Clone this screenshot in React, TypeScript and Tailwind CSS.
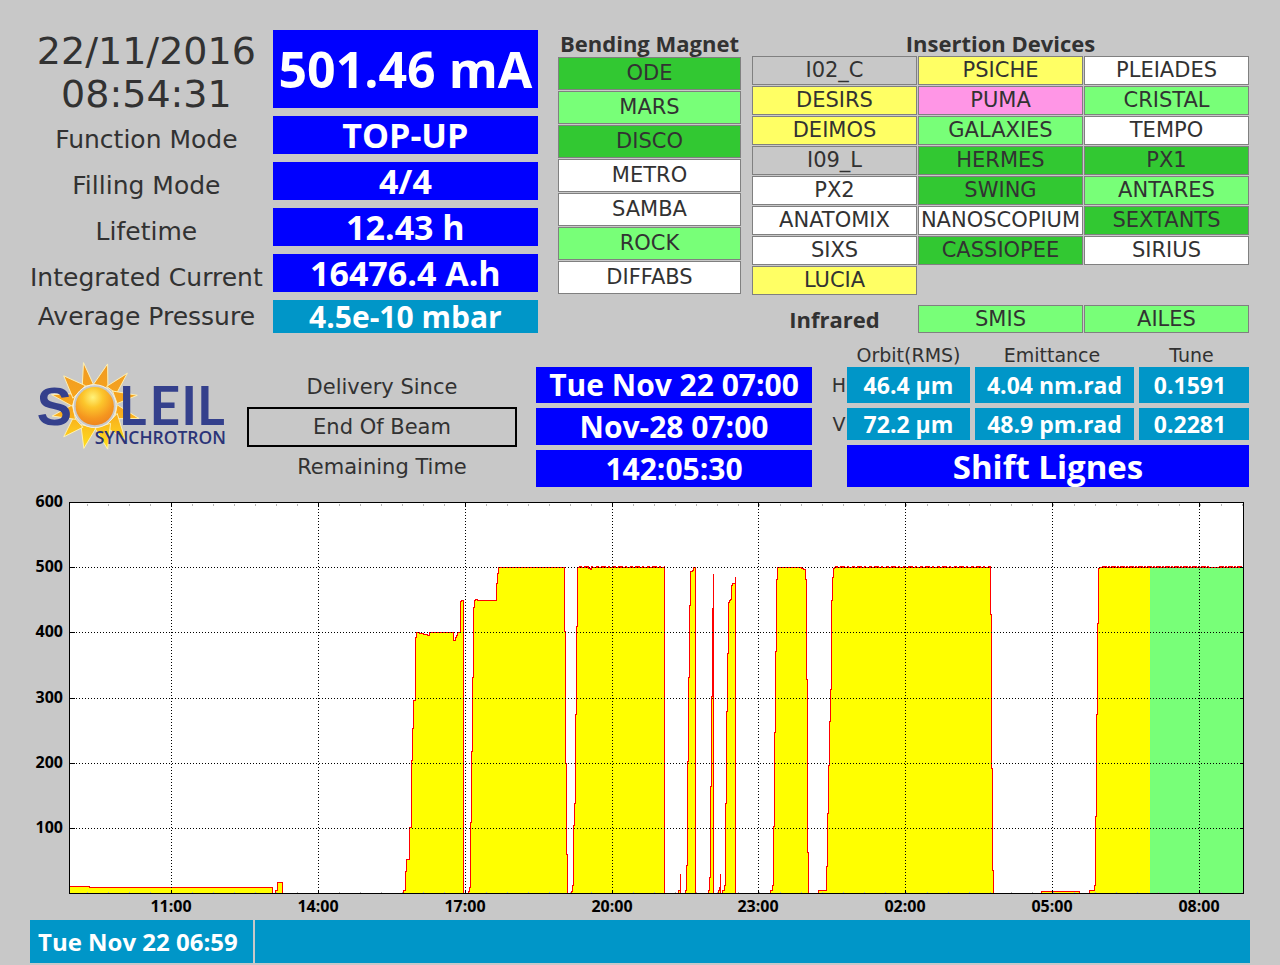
interface Beamline {
  name: string;
  color: string;
}

const OFF = 'bg-[#c8c8c8]';
const WHITE = 'bg-white';
const YELLOW = 'bg-[#ffff64]';
const PINK = 'bg-[#ff96e6]';
const LIGHT = 'bg-[#78ff78]';
const GREEN = 'bg-[#32c832]';

const bendingMagnets: Beamline[] = [
  { name: 'ODE', color: GREEN },
  { name: 'MARS', color: LIGHT },
  { name: 'DISCO', color: GREEN },
  { name: 'METRO', color: WHITE },
  { name: 'SAMBA', color: WHITE },
  { name: 'ROCK', color: LIGHT },
  { name: 'DIFFABS', color: WHITE },
];

const insertionDevices: Beamline[] = [
  { name: 'I02_C', color: OFF },
  { name: 'PSICHE', color: YELLOW },
  { name: 'PLEIADES', color: WHITE },
  { name: 'DESIRS', color: YELLOW },
  { name: 'PUMA', color: PINK },
  { name: 'CRISTAL', color: LIGHT },
  { name: 'DEIMOS', color: YELLOW },
  { name: 'GALAXIES', color: LIGHT },
  { name: 'TEMPO', color: WHITE },
  { name: 'I09_L', color: OFF },
  { name: 'HERMES', color: GREEN },
  { name: 'PX1', color: GREEN },
  { name: 'PX2', color: WHITE },
  { name: 'SWING', color: GREEN },
  { name: 'ANTARES', color: LIGHT },
  { name: 'ANATOMIX', color: WHITE },
  { name: 'NANOSCOPIUM', color: WHITE },
  { name: 'SEXTANTS', color: GREEN },
  { name: 'SIXS', color: WHITE },
  { name: 'CASSIOPEE', color: GREEN },
  { name: 'SIRIUS', color: WHITE },
  { name: 'LUCIA', color: YELLOW },
];

const machine = [
  { label: 'Function Mode', value: 'TOP-UP' },
  { label: 'Filling Mode', value: '4/4' },
  { label: 'Lifetime', value: '12.43 h' },
  { label: 'Integrated Current', value: '16476.4 A.h' },
];

// beam current history, one list of [x, y] steps per fill
const fills: [number, number][][] = [
  [[69, 886], [89, 887], [272, 893]],
  [[275, 890], [277, 882], [282, 893]],
  [
    [403, 890], [405, 871], [406, 859], [409, 827], [411, 760], [412, 728], [413, 700], [415, 637],
    [416, 632], [419, 633], [423, 634], [427, 635], [429, 632], [453, 640], [455, 637], [456, 635],
    [457, 632], [460, 601], [461, 600], [463, 893],
  ],
  [
    [468, 891], [469, 887], [470, 822], [471, 751], [472, 677], [473, 607], [474, 600], [475, 599],
    [477, 600], [496, 583], [497, 573], [498, 567], [564, 631], [565, 763], [566, 854], [567, 893],
  ],
  [
    [571, 891], [572, 885], [573, 825], [574, 803], [575, 714], [576, 626], [577, 567], [588, 568],
    [590, 569], [591, 567], [664, 893],
  ],
  [[678, 890], [680, 873], [680, 893]],
  [
    [685, 890], [686, 865], [687, 761], [688, 677], [689, 605], [690, 571], [692, 570], [693, 567],
    [695, 893],
  ],
  [[708, 890], [709, 877], [710, 786], [711, 696], [712, 608], [713, 573], [713, 893]],
  [[718, 890], [719, 887], [720, 873], [720, 893]],
  [
    [722, 890], [724, 885], [725, 803], [726, 711], [727, 653], [728, 602], [729, 600], [730, 599],
    [731, 585], [732, 583], [735, 576], [735, 893],
  ],
  [
    [770, 890], [772, 885], [773, 826], [774, 732], [775, 651], [776, 579], [777, 567], [801, 568],
    [803, 569], [805, 579], [806, 679], [807, 852], [808, 893],
  ],
  [
    [818, 890], [826, 866], [827, 813], [828, 765], [829, 721], [830, 689], [831, 600], [832, 577],
    [833, 568], [834, 567], [990, 614], [991, 768], [992, 870], [993, 893],
  ],
  [[1041, 891], [1079, 893]],
  [
    [1089, 890], [1094, 885], [1095, 816], [1096, 714], [1097, 623], [1098, 568], [1099, 567],
    [1243, 567],
  ],
];

const yGrid = [
  { value: 600, y: 502 },
  { value: 500, y: 567 },
  { value: 400, y: 632 },
  { value: 300, y: 698 },
  { value: 200, y: 763 },
  { value: 100, y: 828 },
];

const xGrid = [
  { time: '11:00', x: 171 },
  { time: '14:00', x: 318 },
  { time: '17:00', x: 465 },
  { time: '20:00', x: 612 },
  { time: '23:00', x: 758 },
  { time: '02:00', x: 905 },
  { time: '05:00', x: 1052 },
  { time: '08:00', x: 1199 },
];

const minorTicks = Array.from({ length: 56 }, (_, i) => 87 + i * 21).filter((x) => x < 1243);

const stepPath = (points: [number, number][]) =>
  `M${points[0][0]} 893` + points.map(([x, y]) => `H${x}V${y}`).join('');

function BeamlineBox({ name, color }: Beamline) {
  return (
    <li className={`flex items-center justify-center border border-[#808080] text-[21px] leading-none ${color}`}>
      {name}
    </li>
  );
}

function Value({ children, className = '' }: { children: string; className?: string }) {
  return (
    <div
      className={`flex items-center justify-center whitespace-nowrap font-['Open_Sans',sans-serif] leading-none font-bold text-white ${className}`}
    >
      {children}
    </div>
  );
}

function Logo() {
  return (
    <svg viewBox="48 30 582 282" className="w-full" role="img" aria-label="Soleil Synchrotron">
      <defs>
        <linearGradient id="ray" gradientUnits="userSpaceOnUse" x1="0" y1="40" x2="0" y2="300">
          <stop offset="0" stopColor="#f09a22" />
          <stop offset="0.55" stopColor="#f8a81c" />
          <stop offset="1" stopColor="#ffe01e" />
        </linearGradient>
        <radialGradient id="sun" cx="0.45" cy="0.27" r="0.75">
          <stop offset="0" stopColor="#fff27a" />
          <stop offset="0.35" stopColor="#fcc62c" />
          <stop offset="0.75" stopColor="#f5961f" />
          <stop offset="1" stopColor="#ee8420" />
        </radialGradient>
      </defs>
      <g fill="url(#ray)" stroke="#fdf0b4" strokeWidth="3" strokeLinejoin="round">
        <path d="M192 38L188 112L222 104Z" />
        <path d="M265 42L222 104L266 116Z" />
        <path d="M325 70L262 110L292 132Z" />
        <path d="M355 137L280 124L294 162Z" />
        <path d="M360 207L294 166L286 208Z" />
        <path d="M318 270L294 192L256 232Z" />
        <path d="M265 300L274 222L226 236Z" />
        <path d="M193 298L230 236L184 226Z" />
        <path d="M132 263L190 234L162 202Z" />
        <path d="M97 200L158 166L168 210Z" />
        <path d="M95 135L158 170L170 132Z" />
        <path d="M132 78L160 146L198 108Z" />
      </g>
      <g fill="#34408c">
        <text x="50" y="228" fontFamily="'Liberation Sans', sans-serif" fontWeight="700" fontSize="160">
          S
        </text>
        <text x="299 392 488 536" y="228" fontFamily="Lato, sans-serif" fontWeight="700" fontSize="162">
          LEIL
        </text>
      </g>
      <circle cx="226" cy="170" r="65" fill="#c8c8c8" stroke="#f4f0e4" strokeWidth="3" />
      <circle cx="226" cy="170" r="58" fill="url(#sun)" />
      <text x="226" y="285" fill="#2b3478" fontFamily="'Open Sans', sans-serif" fontWeight="600" fontSize="53">
        SYNCHROTRON
      </text>
    </svg>
  );
}

function CurrentChart() {
  return (
    <svg
      viewBox="30 497 1220 423"
      className="block w-full overflow-visible"
      role="img"
      aria-label="Beam current over the last 24 hours"
    >
      <rect x="69" y="502" width="1175" height="392" fill="white" />
      <g transform="translate(0.5 0.5)" shapeRendering="crispEdges" fill="none">
        {fills.map((points) => (
          <path key={points[0][0]} d={`${stepPath(points)}V893Z`} fill="#ffff00" />
        ))}
        <rect x="1149" y="567" width="94" height="326" fill="#78ff78" />
        {fills.map((points) => (
          <path key={points[0][0]} d={stepPath(points)} stroke="#ff0000" />
        ))}
        <path d="M578 566H664M834 566H990" stroke="#ff0000" strokeDasharray="3 2 5 2 2 3" />
        <path d="M1101 566H1209M1218 566H1243" stroke="#ff0000" strokeDasharray="5 1 2 1" />

        <g stroke="#b4b4b4">
          {minorTicks.map((x) => (
            <path key={x} d={`M${x} 503V505M${x} 891V893`} />
          ))}
        </g>
        <g stroke="#000000">
          {yGrid.slice(1).map(({ y }) => (
            <g key={y}>
              <path d={`M69 ${y}H1243`} strokeDasharray="1 2" />
              <path d={`M69 ${y}H74M1239 ${y}H1243`} />
            </g>
          ))}
          {xGrid.map(({ x }) => (
            <g key={x}>
              <path d={`M${x} 502V893`} strokeDasharray="1 2" />
              <path d={`M${x} 502V506M${x} 889V893`} />
            </g>
          ))}
          <rect x="69" y="502" width="1174" height="391" />
        </g>
      </g>
      <g fill="#000000" fontFamily="'Open Sans', sans-serif" fontWeight="700" fontSize="16">
        {yGrid.map(({ value, y }) => (
          <text key={value} x="63" y={y + 5} textAnchor="end">
            {value}
          </text>
        ))}
        {xGrid.map(({ time, x }) => (
          <text key={time} x={x} y="912" textAnchor="middle">
            {time}
          </text>
        ))}
      </g>
    </svg>
  );
}

export default function App() {
  return (
    <main className="min-h-screen bg-[#c8c8c8] pt-[30px] pb-[2px] pl-[30px] font-['DejaVu_Sans',sans-serif] text-[#323232]">
      <div className="mr-[31px] grid grid-cols-[508fr_192fr_497fr] gap-x-[11px]">
        <dl className="grid grid-cols-[231fr_267fr] content-start gap-x-[10px] gap-y-2 text-center text-[25px] leading-none">
          <dt className="-mb-2 text-[38px] leading-[43px] whitespace-nowrap">
            22/11/2016
            <br />
            08:54:31
          </dt>
          <dd>
            <Value className="h-[78px] bg-[#0000ff] text-[50px]">501.46 mA</Value>
          </dd>
          {machine.map(({ label, value }) => (
            <div key={label} className="col-span-2 grid grid-cols-subgrid">
              <dt className="flex items-center justify-center pt-2 whitespace-nowrap">{label}</dt>
              <dd>
                <Value className="h-[38px] bg-[#0000ff] text-[34px]">{value}</Value>
              </dd>
            </div>
          ))}
          <dt className="flex items-center justify-center whitespace-nowrap">Average Pressure</dt>
          <dd>
            <Value className="h-[33px] bg-[#0096c8] text-[30px]">4.5e-10 mbar</Value>
          </dd>
        </dl>

        <section className="pl-[9px]">
          <h2 className="text-center font-['Open_Sans',sans-serif] text-[22px] leading-[27px] font-bold whitespace-nowrap">
            Bending Magnet
          </h2>
          <ul className="grid auto-rows-[33px] gap-px">
            {bendingMagnets.map((line) => (
              <BeamlineBox key={line.name} {...line} />
            ))}
          </ul>
        </section>

        <section>
          <h2 className="text-center font-['Open_Sans',sans-serif] text-[22px] leading-[26px] font-bold">
            Insertion Devices
          </h2>
          <ul className="grid auto-rows-[29px] grid-cols-3 gap-px">
            {insertionDevices.map((line) => (
              <BeamlineBox key={line.name} {...line} />
            ))}
          </ul>
          <div className="mt-[10px] grid grid-cols-3 gap-px">
            <h2 className="text-center font-['Open_Sans',sans-serif] text-[22px] leading-[28px] font-bold">Infrared</h2>
            <ul className="col-span-2 grid auto-rows-[28px] grid-cols-2 gap-px">
              <BeamlineBox name="SMIS" color={LIGHT} />
              <BeamlineBox name="AILES" color={LIGHT} />
            </ul>
          </div>
        </section>
      </div>

      <div className="mt-[10px] mr-[31px] grid grid-cols-[198fr_270fr_276fr_418fr] gap-x-[19px]">
        <div className="pt-[17px] pl-[6px]">
          <Logo />
        </div>
        <div className="flex flex-col pt-6 text-center text-[21px] leading-[40px]">
          <p>Delivery Since</p>
          <p className="border-2 border-black leading-[36px]">End Of Beam</p>
          <p>Remaining Time</p>
        </div>
        <div className="flex flex-col gap-[5px] pt-6">
          <Value className="h-[36px] bg-[#0000ff] text-[30px]">Tue Nov 22 07:00</Value>
          <Value className="h-[37px] bg-[#0000ff] text-[30px]">Nov-28 07:00</Value>
          <Value className="h-[37px] bg-[#0000ff] text-[30px]">142:05:30</Value>
        </div>
        <div>
          <table className="w-full table-fixed border-collapse text-[19px] leading-none">
            <colgroup>
              <col className="w-[16px]" />
              <col className="w-[123px]" />
              <col className="w-[164px]" />
              <col className="w-[115px]" />
            </colgroup>
            <thead>
              <tr className="h-6">
                <td />
                <th className="font-normal">Orbit(RMS)</th>
                <th className="font-normal">Emittance</th>
                <th className="font-normal">Tune</th>
              </tr>
            </thead>
            <tbody>
              <tr>
                <th className="font-normal">H</th>
                <td>
                  <Value className="h-[36px] bg-[#0096c8] text-[23px]">46.4 µm</Value>
                </td>
                <td className="pl-[5px]">
                  <Value className="h-[36px] bg-[#0096c8] text-[23px]">4.04 nm.rad</Value>
                </td>
                <td className="pl-[5px]">
                  <Value className="h-[36px] bg-[#0096c8] pr-2 text-[23px]">0.1591</Value>
                </td>
              </tr>
              <tr>
                <th className="pt-[5px] font-normal">V</th>
                <td className="pt-[5px]">
                  <Value className="h-[32px] bg-[#0096c8] text-[23px]">72.2 µm</Value>
                </td>
                <td className="pt-[5px] pl-[5px]">
                  <Value className="h-[32px] bg-[#0096c8] text-[23px]">48.9 pm.rad</Value>
                </td>
                <td className="pt-[5px] pl-[5px]">
                  <Value className="h-[32px] bg-[#0096c8] pr-2 text-[23px]">0.2281</Value>
                </td>
              </tr>
            </tbody>
          </table>
          <div className="pt-[5px] pl-4">
            <Value className="h-[42px] bg-[#0000ff] text-[33px]">Shift Lignes</Value>
          </div>
        </div>
      </div>

      <div className="mt-[10px] mr-[30px]">
        <CurrentChart />
      </div>

      <footer className="mr-[30px] flex h-[43px] gap-[2px] font-['Open_Sans',sans-serif] text-[24px] leading-[43px] font-bold text-white">
        <p className="w-[223px] bg-[#0096c8] pl-2 whitespace-nowrap">Tue Nov 22 06:59</p>
        <div className="flex-1 bg-[#0096c8]" />
      </footer>
    </main>
  );
}
